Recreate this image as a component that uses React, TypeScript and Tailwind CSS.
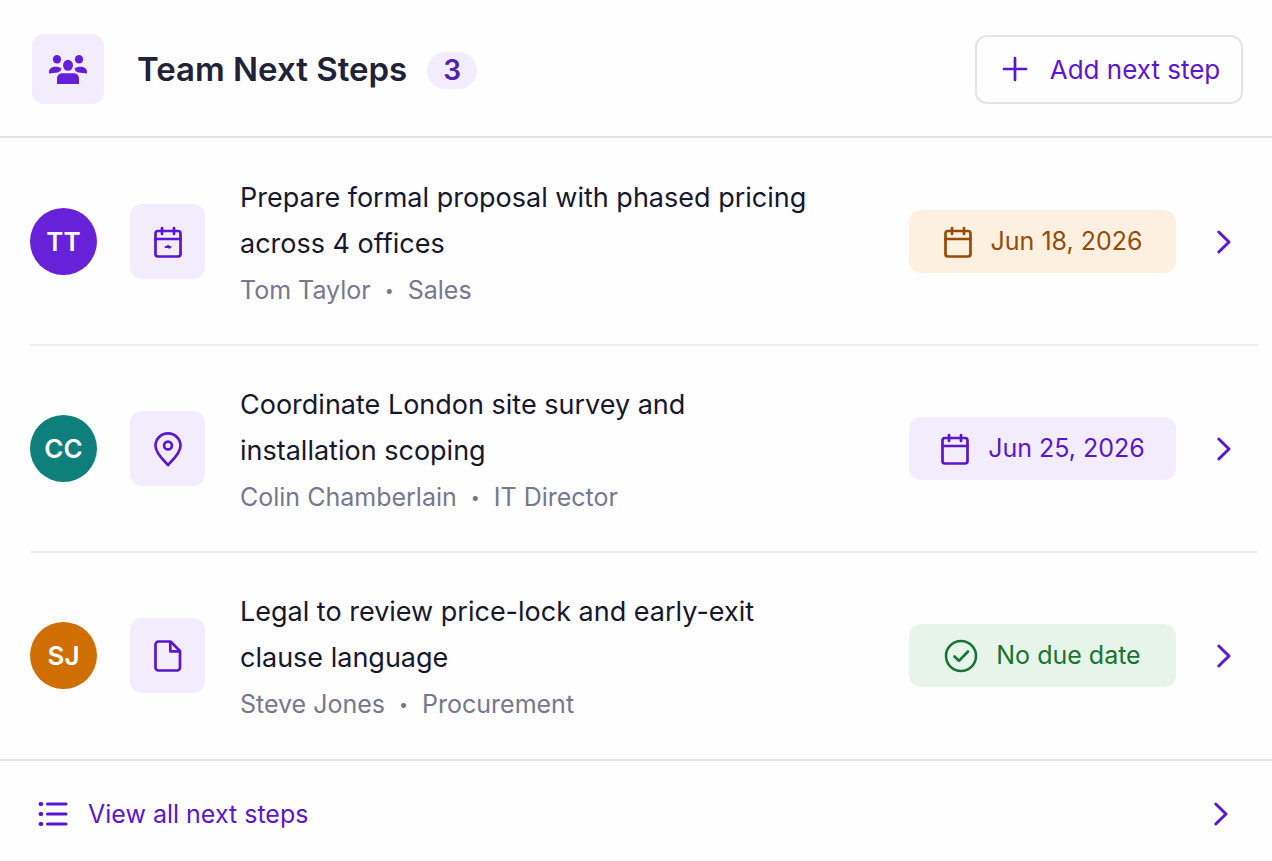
import type { ReactNode } from 'react'

type Step = {
  id: string
  initials: string
  avatarClass: string
  icon: ReactNode
  title: string
  owner: string
  role: string
  due: string
  dueIcon: ReactNode
  dueClass: string
}

function TeamIcon() {
  return (
    <svg width="38" height="30" viewBox="0 0 38 30" fill="currentColor" aria-hidden="true">
      <ellipse cx="8" cy="5.200" rx="4.1" ry="4.3" />
      <ellipse cx="30" cy="5.200" rx="4.1" ry="4.3" />
      <ellipse cx="19" cy="11.300" rx="5" ry="5.500" />
      <path d="M0 19.500v-1.500C0 14.500 3 12.700 6.500 12.700c2.500 0 4.500.6 6 2-.5 2-2 3.300-4 3.800C5.500 18.800 3 19 0 19.500Z" />
      <path d="M38 19.500v-1.500c0-3.500-3-5.300-6.500-5.300-2.500 0-4.500.6-6 2 .5 2 2 3.300 4 3.800 3 .3 5.500.5 8.500 1Z" />
      <path d="M8 30v-5c0-4 2.500-5.700 6-5.700h10c3.500 0 6 1.700 6 5.700v5Z" />
    </svg>
  )
}

function CalendarIcon({ marked = false }: { marked?: boolean }) {
  return (
    <svg width="30" height="34" viewBox="0 0 30 34" fill="none" stroke="currentColor" strokeWidth="2.700" strokeLinecap="round" aria-hidden="true">
      <rect x="2.500" y="6" width="25" height="25.500" rx="2.500" />
      <path d="M2.500 14h25M9 3v6M21 3v6" />
      {marked && <path d="M12.500 22h5M15 20.800l1.500 2" strokeWidth="2" />}
    </svg>
  )
}

function PinIcon() {
  return (
    <svg width="30" height="36" viewBox="0 0 30 36" fill="none" stroke="currentColor" strokeWidth="2.700" strokeLinejoin="round" aria-hidden="true">
      <path d="M15 34C11 29.500 2.500 22.500 2.500 14.800a12.500 12.500 0 0 1 25 0C27.500 22.500 19 29.500 15 34Z" />
      <circle cx="15" cy="14.500" r="3.900" />
    </svg>
  )
}

function FileIcon() {
  return (
    <svg width="30" height="34" viewBox="0 0 30 34" fill="none" stroke="currentColor" strokeWidth="2.700" strokeLinejoin="round" aria-hidden="true">
      <path d="M5.500 2.500h12L27 12V28.500a3 3 0 0 1-3 3H5.500a3 3 0 0 1-3-3V5.500a3 3 0 0 1 3-3Z" />
      <path d="M17.300 3V12.300h9.300" />
    </svg>
  )
}

function CheckCircleIcon() {
  return (
    <svg width="34" height="34" viewBox="0 0 34 34" fill="none" stroke="currentColor" strokeWidth="2.600" strokeLinecap="round" strokeLinejoin="round" aria-hidden="true">
      <circle cx="17" cy="17" r="15" />
      <path d="M10.500 17.500l4.500 4.300 9-9.300" />
    </svg>
  )
}

function ChevronIcon() {
  return (
    <svg width="16" height="26" viewBox="0 0 16 26" fill="none" stroke="currentColor" strokeWidth="3" strokeLinecap="round" strokeLinejoin="round" aria-hidden="true">
      <path d="M2.800 3l10.200 10-10.200 10" />
    </svg>
  )
}

function PlusIcon() {
  return (
    <svg width="26" height="26" viewBox="0 0 26 26" fill="none" stroke="currentColor" strokeWidth="2.700" strokeLinecap="round" aria-hidden="true">
      <path d="M13 2v22M2 13h22" />
    </svg>
  )
}

function ListIcon() {
  return (
    <svg width="30" height="26" viewBox="0 0 30 26" fill="none" stroke="currentColor" strokeWidth="3" strokeLinecap="round" aria-hidden="true">
      <path d="M9.500 3h18.500M9.500 13h18.500M9.500 23h18.500" />
      <path d="M2.500 3h.8M2.500 13h.8M2.500 23h.8" strokeWidth="4" />
    </svg>
  )
}

const steps: Step[] = [
  {
    id: 'proposal',
    initials: 'TT',
    avatarClass: 'bg-[#6721d8]',
    icon: <CalendarIcon marked />,
    title: 'Prepare formal proposal with phased pricing across 4 offices',
    owner: 'Tom Taylor',
    role: 'Sales',
    due: 'Jun 18, 2026',
    dueIcon: <CalendarIcon />,
    dueClass: 'bg-[#fef0e1] text-[#964b06]',
  },
  {
    id: 'survey',
    initials: 'CC',
    avatarClass: 'bg-[#0f7f7b]',
    icon: <PinIcon />,
    title: 'Coordinate London site survey and installation scoping',
    owner: 'Colin Chamberlain',
    role: 'IT Director',
    due: 'Jun 25, 2026',
    dueIcon: <CalendarIcon />,
    dueClass: 'bg-[#f2ecfc] text-[#5b16d0]',
  },
  {
    id: 'legal',
    initials: 'SJ',
    avatarClass: 'bg-[#cf6e02]',
    icon: <FileIcon />,
    title: 'Legal to review price-lock and early-exit clause language',
    owner: 'Steve Jones',
    role: 'Procurement',
    due: 'No due date',
    dueIcon: <CheckCircleIcon />,
    dueClass: 'bg-[#e7f4ea] text-[#16752f]',
  },
]

function StepRow({ step }: { step: Step }) {
  return (
    <li className="flex items-center border-b-2 border-[#ededf1] py-[30px] last:border-b-0">
      <div
        className={`flex size-[67px] shrink-0 items-center justify-center rounded-full text-[26px] font-semibold text-white ${step.avatarClass}`}
      >
        {step.initials}
      </div>
      <div className="ml-[33px] flex size-[75px] shrink-0 items-center justify-center rounded-xl bg-[#f2ecfc] text-[#5b16d0]">
        {step.icon}
      </div>
      <div className="ml-[35px] min-w-0 flex-1 pt-[6px]">
        <h3 className="max-w-[580px] text-[27px] leading-[46px] text-[#17172f]">{step.title}</h3>
        <p className="flex gap-[14px] text-[25px] leading-[47px] text-[#77778f]">
          <span>{step.owner}</span>
          <span className="text-base leading-[47px]">•</span>
          <span>{step.role}</span>
        </p>
      </div>
      <div
        className={`flex h-[63px] w-[267px] shrink-0 items-center justify-center gap-[18px] rounded-xl text-[25px] ${step.dueClass}`}
      >
        {step.dueIcon}
        <span>{step.due}</span>
      </div>
      <button type="button" aria-label={`Open ${step.title}`} className="ml-6 mr-[10px] flex w-12 justify-center py-3 text-[#5b16d0]">
        <ChevronIcon />
      </button>
    </li>
  )
}

export default function App() {
  return (
    <main className="min-h-screen bg-[#fefefe] font-['Inter',sans-serif]">
      {/* Header */}
      <header className="flex items-center border-b-2 border-[#e3e3ea] pt-[34px] pr-[29px] pb-8 pl-8">
        <div className="flex h-[70px] w-[72px] items-center justify-center rounded-xl bg-[#f2ecfc] text-[#6420d8]">
          <TeamIcon />
        </div>
        <div className="ml-[33px] flex items-center gap-5 pt-[2px]">
          <h2 className="text-[33px] font-semibold text-[#212138]">Team Next Steps</h2>
          <span className="flex h-[37px] w-[50px] items-center justify-center rounded-full bg-[#f2ecfc] text-[28px] font-semibold text-[#5322ab]">
            3
          </span>
        </div>
        <button
          type="button"
          className="ml-auto flex h-[69px] w-[268px] items-center justify-center gap-[22px] rounded-xl border-2 border-[#e3e3ea] pl-1 text-[26px] text-[#5b16d0]"
        >
          <PlusIcon />
          Add next step
        </button>
      </header>

      {/* Steps */}
      <ul className="py-px pr-[14px] pl-[30px]">
        {steps.map((step) => (
          <StepRow key={step.id} step={step} />
        ))}
      </ul>

      {/* Footer */}
      <a href="#" className="flex items-center border-t-2 border-[#e3e3ea] pt-[31px] pr-[43px] pb-6 pl-[38px] text-[25px] leading-[44px] text-[#5b16d0]">
        <ListIcon />
        <span className="ml-5">View all next steps</span>
        <span className="ml-auto">
          <ChevronIcon />
        </span>
      </a>
    </main>
  )
}
